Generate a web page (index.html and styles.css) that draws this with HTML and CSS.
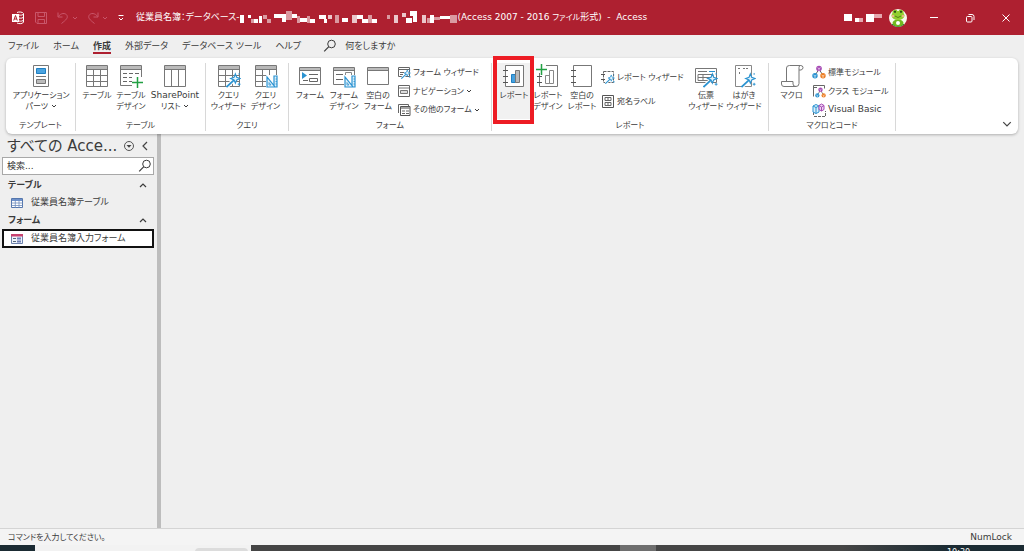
FILE: index.html
```html
<!DOCTYPE html>
<html lang="ja">
<head>
<meta charset="utf-8">
<title>従業員名簿 - Access</title>
<link rel="stylesheet" href="styles.css">
</head>
<body>
<svg class="defs" aria-hidden="true">
  <symbol id="down" viewBox="0 0 6 6"><path d="M1 2l2 2 2-2" fill="none" stroke="currentColor"/></symbol>
  <symbol id="up" viewBox="0 0 8 8"><path d="M1 6l3-3 3 3" fill="none" stroke="currentColor" stroke-width="1.2"/></symbol>
  <symbol id="lens" viewBox="0 0 14 14"><circle cx="8.5" cy="5" r="3.8" fill="none" stroke="currentColor"/><path d="M5.6 7.8L1.2 12.4" stroke="currentColor" stroke-width="1.2"/></symbol>
  <symbol id="grid" viewBox="0 0 24 24"><path d="M1.5 1.5h21v21h-21z" fill="#fff" stroke="#777"/><path d="M2 2h20v3H2z" fill="#b8b8b8"/><path d="M1.5 5.5h21M1.5 11.5h21M1.5 17.5h21M8.5 5.5v17M15.5 5.5v17" fill="none" stroke="#777"/></symbol>
  <symbol id="wand" viewBox="0 0 16 16"><path d="M1 15L9 7.500" stroke="#fff" stroke-width="4"/><path d="M0.500 15.500L9 7.500" stroke="#2b93d1" stroke-width="1.800"/><path d="M10 1.500l1.400 3.600L15 6.500l-3.600 1.400L10 11.500 8.600 7.900 5 6.500l3.600-1.400z" fill="#e6f4fc" stroke="#2b93d1" stroke-width="1.200"/><path d="M14 11v3M12.500 12.500h3M14 .5v2" stroke="#2b93d1"/></symbol>
  <symbol id="ruler" viewBox="0 0 12 13"><path d="M0 0h12v13H0z" fill="#fff"/><path d="M1 2v10h8zM8 1h3v11H9L8 10.500z" fill="#e1f1fb" stroke="#2b93d1" stroke-width="1.200"/><path d="M3 7.500v2.500h2z" fill="#fff" stroke="#2b93d1" stroke-width=".8"/><path d="M9.500 4H11M9.500 6.500H11M9.500 9H11" stroke="#2b93d1" stroke-width=".8"/></symbol>
  <symbol id="form" viewBox="0 0 24 24"><path d="M1.500 3.500h21v17h-21z" fill="#fff" stroke="#777"/><path d="M2 4h20v2.500H2z" fill="#bbb"/><path d="M1.500 6.500h21" stroke="#777"/></symbol>
  <symbol id="book" viewBox="0 0 24 24"><path d="M3.500 1.500h18v21h-18z" fill="#fff" stroke="#777"/><path d="M1 6.500h5M1 12.500h5M1 18.500h5" stroke="#555"/></symbol>
  <symbol id="mods" viewBox="0 0 14 14"><path d="M7 4L3 10.500M7 4l4 6.500" stroke="#666"/><circle cx="7" cy="3.500" r="2.800" fill="#a64bb5"/><circle cx="3" cy="10.700" r="2.700" fill="#2b93d1"/><circle cx="11" cy="10.700" r="2.700" fill="#ed7d22"/><path d="M5.500 2.700l1.500 1 1.500-1M7 3.700v2M1.500 10l1.500 1 1.500-1M3 11v2M9.500 10l1.500 1 1.500-1M11 11v2" fill="none" stroke="#fff" stroke-width=".6"/></symbol>
</svg>

<header class="titlebar">
  <svg class="logo" viewBox="0 0 14 14"><path d="M6 1.500c2-1 6-.5 6.500 1v8.500c-.5 2-4.500 2-6.500 1" fill="none" stroke="#fff"/><path d="M8 4c2 .500 4 0 4.500-1M8 7c2 .500 4 0 4.500-1M8 10c2 .500 4 0 4.500-1" fill="none" stroke="#fff"/><path d="M1 3h7v8H1z" fill="#fff"/><path d="M2.700 9.500l1.800-5 1.800 5M3.300 8h2.400" fill="none" stroke="#ae2030"/></svg>
  <div class="quick">
    <button aria-label="上書き保存"><svg width="14" height="14" viewBox="0 0 14 14"><path d="M1.500 1.500h11v11h-9.500l-1.500-1.500zM4 1.500v4h6.500v-4M4 12.500v-4h6.500v4" fill="none" stroke="currentColor"/></svg></button>
    <button aria-label="元に戻す"><svg width="14" height="14" viewBox="0 0 14 14"><path d="M2 1.500v4.500h4.500M2.500 5.500c2-3.500 7-4 8.500-1 1 2.500-.5 4-5.500 8" fill="none" stroke="currentColor"/></svg><svg class="dd"><use href="#down"/></svg></button>
    <button aria-label="やり直し"><svg width="14" height="14" viewBox="0 0 14 14"><path d="M12 1.500v4.500H7.500M11.500 5.500c-2-3.500-7-4-8.500-1-1 2.500.5 4 5.500 8" fill="none" stroke="currentColor"/></svg><svg class="dd"><use href="#down"/></svg></button>
    <button class="more" aria-label="クイック アクセス"><svg width="6" height="8" viewBox="0 0 6 8"><path d="M.5 1.500h5M1 4l2 2 2-2" fill="none" stroke="currentColor"/></svg></button>
  </div>
  <h1 class="doc"><span>従業員名簿：データベース-</span><svg class="mosaic" viewBox="0 0 218 16"><g fill="#fff"><path d="M0 5h4v8H0zM8 5h3v3H8zM14 9h4v4h-4zM19 6h3v7h-3zM34 4h12v4H34zM42 8h4v4h-4zM52 4h5v4h-5zM60 8h7v4h-7zM70 9h5v4h-5zM79 5h7v4h-7zM84 9h3v4h-3zM102 8h6v4h-6zM117 5h6v4h-6zM122 9h6v4h-6zM132 9h5v4h-5zM170 1h7v5h-7zM166 8h6v5h-6zM173 5h4v7h-4zM190 5h4v8h-4zM200 6h10v3h-10z"/><path d="M88 5h4v4h-4zM112 5h5v8h-5zM154 5h4v8h-4zM162 3h4v4h-4zM182 5h4v8h-4z" opacity=".75"/><path d="M11 9h3v4h-3zM23 5h4v4h-4zM27 9h4v4h-4zM46 1h6v9h-6zM57 6h3v7h-3zM67 6h3v7h-3zM95 5h4v8h-4zM128 5h4v8h-4zM147 5h3v4h-3zM187 8h3v5h-3zM194 7h6v3h-6zM210 5h7v8h-7z" opacity=".55"/></g></svg><span>(Access 2007 - 2016 <small>ファイル</small>形式)&nbsp; -&nbsp; Access</span></h1>
  <svg class="user" viewBox="0 0 38 10"><path d="M0 1h8v7H0zM22 1h8v8h-8z" fill="#fff"/><path d="M11 5h8v4h-8zM30 1h8v4h-8z" fill="#e4a7ae"/><path d="M11 5h4v4h-4z" fill="#fff"/></svg>
  <svg class="avatar" viewBox="0 0 18 18"><clipPath id="c"><circle cx="9" cy="9" r="9"/></clipPath><g clip-path="url(#c)"><path d="M0 0h18v18H0z" fill="#f7f8ec"/><path d="M0 15h18v3H0z" fill="#248b43"/><ellipse cx="9" cy="14" rx="5.500" ry="3.500" fill="#72b81f"/><circle cx="6" cy="3" r="2.500" fill="#80c425"/><circle cx="12" cy="3" r="2.500" fill="#80c425"/><ellipse cx="9" cy="6.500" rx="6.500" ry="4.500" fill="#91ce2e"/><circle cx="6" cy="2.800" r="1.100" fill="#244711"/><circle cx="12" cy="2.800" r="1.100" fill="#244711"/><circle cx="9" cy="14" r="2" fill="#fff"/><circle cx="4" cy="7" r="1.200" fill="#eeb58a"/><circle cx="14" cy="7" r="1.200" fill="#eeb58a"/><path d="M6 7q3 3 6 0" fill="none" stroke="#446e12" stroke-width=".8"/></g></svg>
  <div class="win">
    <button aria-label="最小化"><svg viewBox="0 0 10 10"><path d="M1 4.500h8" stroke="#fff"/></svg></button>
    <button aria-label="元に戻す"><svg viewBox="0 0 10 10"><rect x="1.500" y="3.500" width="5.500" height="5.500" rx="1" fill="none" stroke="#fff"/><path d="M3.500 1.500h3.500q2 0 2 2v3.500" fill="none" stroke="#fff"/></svg></button>
    <button aria-label="閉じる"><svg viewBox="0 0 10 10"><path d="M1.500 1.500l7 7M8.500 1.500l-7 7" stroke="#fff"/></svg></button>
  </div>
</header>

<nav class="tabs">
  <button>ファイル</button><button>ホーム</button><button class="on">作成</button><button>外部データ</button><button>データベース ツール</button><button>ヘルプ</button>
  <button class="tell"><svg class="lens"><use href="#lens"/></svg>何をしますか</button>
</nav>

<section class="ribbon" aria-label="作成">
  <div class="group g-template"><div class="tools">
    <button class="big w62"><svg viewBox="0 0 24 24"><path d="M4.500 1.500h15v21h-15z" fill="#fff" stroke="#777"/><path d="M7.500 4.500h9v5h-9z" fill="#4ba3df" stroke="#1f7fc1"/><path d="M7 12.500h10" stroke="#777"/><path d="M7.500 15.500h9v4h-9z" fill="#bbb" stroke="#777"/></svg><span>アプリケーション<br>パーツ <svg class="dd"><use href="#down"/></svg></span></button>
  </div><h2>テンプレート</h2></div>

  <div class="group g-table"><div class="tools">
    <button class="big w34"><svg viewBox="0 0 24 24"><use href="#grid"/></svg><span>テーブル</span></button>
    <button class="big w34"><svg viewBox="0 0 24 24"><path d="M1.500 1.500h21v20h-21z" fill="#fff" stroke="#777"/><path d="M2 2h20v3H2z" fill="#bbb"/><path d="M1.500 5.500h21" stroke="#777"/><path d="M4 9.500h16M4 13.500h12M4 17.500h9" stroke="#666" stroke-dasharray="4 2"/><path d="M13 13h11v11H13z" fill="#fff"/><path d="M18.500 13v11M13 18.500h11" stroke="#22a043" stroke-width="1.500"/></svg><span>テーブル<br>デザイン</span></button>
    <button class="big w54"><svg viewBox="0 0 24 24"><path d="M1.500 1.500h21v21h-21z" fill="#fff" stroke="#777"/><path d="M2 2h20v3H2z" fill="#bbb"/><path d="M1.500 5.500h21M8.500 5.500v17M15.500 5.500v17" stroke="#777"/></svg><span><b class="latin">SharePoint</b><br>リスト <svg class="dd"><use href="#down"/></svg></span></button>
  </div><h2>テーブル</h2></div>

  <div class="group g-query"><div class="tools">
    <button class="big w37"><svg viewBox="0 0 24 24"><use href="#grid"/><use href="#wand" x="9" y="8" width="15" height="16"/></svg><span>クエリ<br>ウィザード</span></button>
    <button class="big w37"><svg viewBox="0 0 24 24"><use href="#grid"/><use href="#ruler" x="12" y="11" width="12" height="13"/></svg><span>クエリ<br>デザイン</span></button>
  </div><h2>クエリ</h2></div>

  <div class="group g-form"><div class="tools">
    <button class="big w34"><svg viewBox="0 0 24 24"><use href="#form"/><path d="M4 8l5 3.500-5 3.500z" fill="#2b93d1"/><path d="M11 10.500h9M5 16.500h5" stroke="#666"/><path d="M11.500 14.500h8v3h-8z" fill="none" stroke="#666"/></svg><span>フォーム</span></button>
    <button class="big w34"><svg viewBox="0 0 24 24"><use href="#form"/><path d="M4 10.500h7M4 15.500h7" stroke="#666"/><path d="M13.500 8.500h6v3h-6z" fill="none" stroke="#888"/><use href="#ruler" x="12" y="11" width="12" height="13"/></svg><span>フォーム<br>デザイン</span></button>
    <button class="big w34"><svg viewBox="0 0 24 24"><use href="#form"/></svg><span>空白の<br>フォーム</span></button>
    <div class="list">
      <button><svg viewBox="0 0 14 14"><path d="M1.500 2.500h11v9h-11z" fill="#fff" stroke="#666"/><path d="M1.500 4.500h11M3 7.500h4M3 9.500h3" stroke="#666"/><use href="#wand" x="4" y="4" width="10" height="10"/></svg>フォーム ウィザード</button>
      <button><svg viewBox="0 0 14 14"><path d="M1.500 1.500h11v11h-11z" fill="#fff" stroke="#666"/><path d="M2 4h10" stroke="#777"/><path d="M3.500 6.500h7v3h-7z" fill="#ddd" stroke="#777"/></svg>ナビゲーション <svg class="dd"><use href="#down"/></svg></button>
      <button><svg viewBox="0 0 14 14"><path d="M1.500 10V1.500h10v2" fill="#fff" stroke="#666"/><path d="M3.500 3.500h9.500v9H3.500z" fill="#fff" stroke="#555"/><path d="M4 5h9" stroke="#888" stroke-width="1.500"/><path d="M5 8h3M5 10.500h3M9 8h3M9 10.500h3" stroke="#666"/></svg>その他のフォーム <svg class="dd"><use href="#down"/></svg></button>
    </div>
  </div><h2>フォーム</h2></div>

  <div class="group g-report"><div class="tools">
    <button class="big w34 marked"><svg viewBox="0 0 24 24"><use href="#book"/><path d="M9.500 10.500h4v8h-4z" fill="#45a1df" stroke="#1f7fc1"/><path d="M13.500 6.500h4v12h-4z" fill="#bbb" stroke="#777"/></svg><span>レポート</span></button>
    <button class="big w34"><svg viewBox="0 0 24 24"><use href="#book"/><path d="M9.500 11.500h4v8h-4zM13.500 6.500h4v13h-4z" fill="#fff" stroke="#888"/><path d="M0 0h10v9H0z" fill="#fff"/><path d="M5.500 0v11M0 5.500h11" stroke="#22a043" stroke-width="1.500"/></svg><span>レポート<br>デザイン</span></button>
    <button class="big w34"><svg viewBox="0 0 24 24"><use href="#book"/></svg><span>空白の<br>レポート</span></button>
    <div class="list two">
      <button><svg viewBox="0 0 14 14"><path d="M2.500 1.500h10v11h-10z" fill="#fff" stroke="#666" stroke-dasharray="3 1"/><path d="M0 4.500h4M0 9.500h4" stroke="#555"/><use href="#wand" x="4" y="4" width="10" height="10"/></svg>レポート ウィザード</button>
      <button><svg viewBox="0 0 14 14"><path d="M1.500 1.500h11v12h-11z" fill="#fff" stroke="#555"/><path d="M4 3.500h6v3H4zM4 8.500h6v3H4zM6 5h2M6 10h2" fill="none" stroke="#666"/></svg>宛名ラベル</button>
    </div>
    <button class="big w38"><svg viewBox="0 0 24 24"><path d="M1.500 4.500h21v14h-21z" fill="#fff" stroke="#777"/><path d="M4 7.500h9M4 10.500h15v6H4zM4 13.500h15M9 10.500v6" fill="none" stroke="#777"/><path d="M15 7.500h6" stroke="#2b93d1"/><use href="#wand" x="9" y="8" width="15" height="16"/></svg><span>伝票<br>ウィザード</span></button>
    <button class="big w38"><svg viewBox="0 0 24 24"><path d="M3.500 1.500h16v21h-16z" fill="#fff" stroke="#888"/><path d="M6 4.500h3M11 4.500h6M7.500 8v3" stroke="#777" stroke-dasharray="2 1"/><use href="#wand" x="9" y="8" width="15" height="16"/></svg><span>はがき<br>ウィザード</span></button>
  </div><h2>レポート</h2></div>

  <div class="group g-macro"><div class="tools">
    <button class="big w37"><svg viewBox="0 0 24 24"><path d="M6.500 17V4q0-2.500 3-2.500h11q2.500 0 2.500 2t-2 2.500h-2v13.500q0 3-3 3H4q-2.500 0-2.500-2.500v-2.500H13V20q0 2.500 3 2.500M19 6V3.500q0-2 1.500-2" fill="#fff" stroke="#777"/></svg><span>マクロ</span></button>
    <div class="list">
      <button><svg viewBox="0 0 14 14"><use href="#mods"/></svg>標準モジュール</button>
      <button><svg viewBox="0 0 14 14"><path d="M1.500 12.500v-11h11v3M1 3.500h4" fill="none" stroke="#666"/><use href="#mods" x="3" y="3" width="11" height="11"/></svg>クラス モジュール</button>
      <button class="latin"><svg viewBox="0 0 14 14"><path d="M2 13.500h11.500V8M1.500 9v4" fill="none" stroke="#666" stroke-dasharray="3 1"/><path d="M1 3l3-1.500 3 1.500v6L4 10.500 1 9z" fill="#d9effc" stroke="#2b93d1"/><path d="M1 3l3 1.500L7 3M4 4.500v6" fill="none" stroke="#2b93d1"/><path d="M7 2.500L9.500 1 12 2.500v4L9.500 8 7 6.500z" fill="#eed6f3" stroke="#a64bb5"/><path d="M7 2.500L9.500 4 12 2.500M9.500 4v4" fill="none" stroke="#a64bb5"/></svg>Visual Basic</button>
    </div>
  </div><h2>マクロとコード</h2></div>
  <button class="collapse" aria-label="リボンの表示オプション"><svg viewBox="0 0 8 8"><path d="M1 2.500l3 3 3-3" fill="none" stroke="#444"/></svg></button>
</section>

<main class="work">
  <aside class="pane">
    <div class="head"><h2>すべての Acce...</h2>
      <button aria-label="メニュー"><svg width="12" height="12" viewBox="0 0 12 12"><circle cx="6" cy="6" r="4.500" fill="none" stroke="#555"/><path d="M3.500 5h5L6 7.800z" fill="#444"/></svg></button>
      <button aria-label="閉じる"><svg width="8" height="10" viewBox="0 0 8 10"><path d="M6 1L2 5l4 4" fill="none" stroke="#444" stroke-width="1.200"/></svg></button></div>
    <label class="search"><input type="text" placeholder="検索..." aria-label="検索"><svg class="lens"><use href="#lens"/></svg></label>
    <button class="sect">テーブル<svg><use href="#up"/></svg></button>
    <a class="item" href="#t"><svg viewBox="0 0 12 10"><path d="M.5.5h11v9H.5z" fill="#fff" stroke="#5577ad"/><path d="M1 1h10v2H1z" fill="#6f92cc"/><path d="M.5 5h11M.5 7.500h11M4.300 1v9M8 1v9" stroke="#6f8dbd" stroke-width=".8"/></svg>従業員名簿テーブル</a>
    <button class="sect">フォーム<svg><use href="#up"/></svg></button>
    <a class="item sel" href="#f"><svg viewBox="0 0 12 10"><path d="M.5.5h11v9H.5z" fill="#eef3fb" stroke="#6d82ad"/><path d="M0 0h12v2.500H0z" fill="#c8426f"/><path d="M2 4.500h3M2 7.500h3" stroke="#567"/><path d="M6 3.500h4v2H6zM6 6.500h4v2H6z" fill="#6f7fb6"/></svg>従業員名簿入力フォーム</a>
  </aside>
  <div class="canvas"></div>
</main>
<footer class="status"><small>コマンドを入力してください。</small><span>NumLock</span></footer>
<div class="taskbar"><div class="find"><i></i></div><div class="rest"><i></i></div><time>10:30</time></div>
</body>
</html>
```
FILE: styles.css
```css
* { box-sizing: border-box; }
body {
  margin: 0; height: 100vh; overflow: hidden;
  display: flex; flex-direction: column;
  background: #efefef; color: #3b3b3b;
  font: 9px/11px "DejaVu Sans", "Noto Sans CJK JP", sans-serif;
  font-feature-settings: "palt";
}
button, input { font: inherit; font-feature-settings: inherit; color: inherit; background: none; border: 0; padding: 0; margin: 0; }
button, h1, h2 { white-space: nowrap; }
h1, h2 { margin: 0; font-size: inherit; font-weight: normal; }
small { font-size: 8px; }
svg { display: block; flex: none; }
.defs { position: absolute; width: 0; height: 0; }
.dd { display: inline-block; width: 6px; height: 6px; }
.lens { width: 14px; height: 14px; }

.titlebar { flex: none; height: 35px; display: flex; align-items: center; background: #ae2030; color: #fff; padding-left: 11px; }
.logo { width: 14px; height: 14px; }
.quick { display: flex; align-items: center; gap: 8px; margin-left: 9px; color: #c9566a; }
.quick button { display: flex; align-items: center; gap: 2px; }
.quick .more { color: #fff; margin-left: 2px; }
.doc { flex: 1; display: flex; align-items: center; margin-left: 12px; }
.mosaic { width: 218px; height: 16px; }
.user { width: 38px; height: 10px; }
.avatar { width: 18px; height: 18px; margin-left: 7px; }
.win { display: flex; margin-left: 9px; }
.win button { width: 36px; display: flex; justify-content: center; }
.win svg { width: 10px; height: 10px; }

.tabs { flex: none; height: 23px; display: flex; align-items: center; gap: 14px; padding-left: 8px; }
.tabs button { height: 15px; padding-top: 1px; border-bottom: 2px solid transparent; }
.tabs .on { font-weight: bold; border-color: #ae2030; }
.tabs .tell { display: flex; align-items: center; gap: 8px; margin-left: 8px; }

.ribbon {
  flex: none; position: relative; display: flex; margin: 0 6px; padding: 5px 0 3px;
  background: #fff; border-radius: 6px; box-shadow: 0 1px 3px #0004; font-size: 8px;
}
.latin { font-size: 9px; font-weight: normal; }
.group { flex: none; display: flex; flex-direction: column; border-right: 1px solid #d8d8d8; text-align: center; }
.g-template { width: 70px; }
.g-table { width: 130px; }
.g-query { width: 83px; }
.g-form { width: 203px; }
.g-report { width: 277px; }
.g-macro { width: 127px; }
.tools { height: 56px; display: flex; padding-left: 4px; }
.g-report .tools { padding-left: 5px; }
.group h2 { padding-top: 1px; line-height: 11px; }
.big { flex: none; display: flex; flex-direction: column; align-items: center; padding-top: 1px; }
.big > svg { width: 24px; height: 24px; margin-bottom: 2px; }
.w34 { width: 34px; }
.w37 { width: 37px; }
.w38 { width: 38px; }
.w54 { width: 54px; }
.w62 { width: 62px; }
.list { display: flex; flex-direction: column; padding-left: 2px; }
.list button { height: 19px; display: flex; align-items: center; gap: 2px; }
.list button > svg:first-child { width: 14px; height: 14px; }
.two { width: 88px; flex: none; padding-top: 2px; }
.two button { height: 24px; }
.marked { position: relative; background: #f1f1f1; }
.marked::after { content: ""; position: absolute; inset: -7px -3px -5px -4px; border: 4px solid #ed1c24; z-index: 1; }
.collapse { position: absolute; right: 6px; bottom: 5px; }
.collapse svg { width: 10px; height: 10px; }

.work { flex: 1; min-height: 0; display: flex; }
.pane { width: 161px; border-right: 4px solid #bdbdbd; padding: 0 3px 0 2px; display: flex; flex-direction: column; }
.head { display: flex; align-items: center; height: 23px; padding: 0 5px; gap: 6px; }
.head h2 { flex: 1; font-size: 15px; line-height: 20px; }
.search { display: flex; align-items: center; height: 18px; margin-bottom: 1px; border: 1px solid #a8a8a8; background: #fff; padding: 0 1px 0 4px; }
.search input { flex: 1; min-width: 0; outline: 0; }
.search input::placeholder { color: #333; }
.sect { display: flex; justify-content: space-between; align-items: center; height: 18px; padding: 0 7px 0 6px; font-weight: bold; }
.sect svg { width: 8px; height: 8px; }
.item { display: flex; align-items: center; gap: 8px; height: 17px; padding-left: 9px; color: inherit; text-decoration: none; }
.item svg { width: 12px; height: 10px; }
.sel { height: 19px; padding-left: 7px; background: #fff; border: 2px solid #111; }
.canvas { flex: 1; }

.status { flex: none; height: 17px; display: flex; align-items: center; justify-content: space-between; padding: 0 12px 0 8px; background: #f4f4f4; border-top: 1px solid #d4d4d4; }
.taskbar { flex: none; height: 6px; display: flex; overflow: hidden; padding-left: 35px; background: #1b2b33; }
.find { width: 216px; background: #f2f2f2; padding: 3px 3px 0 160px; }
.find i { display: block; height: 6px; border-radius: 4px 4px 0 0; background: #dcdcdc; }
.rest { flex: 1; background: linear-gradient(90deg, #454545 85%, #1b2b33); padding-left: 369px; }
.rest i { display: block; width: 36px; height: 6px; background: #6e6e6e; }
.taskbar time { color: #fff; width: 77px; font-size: 8px; padding-top: 2px; }
```
